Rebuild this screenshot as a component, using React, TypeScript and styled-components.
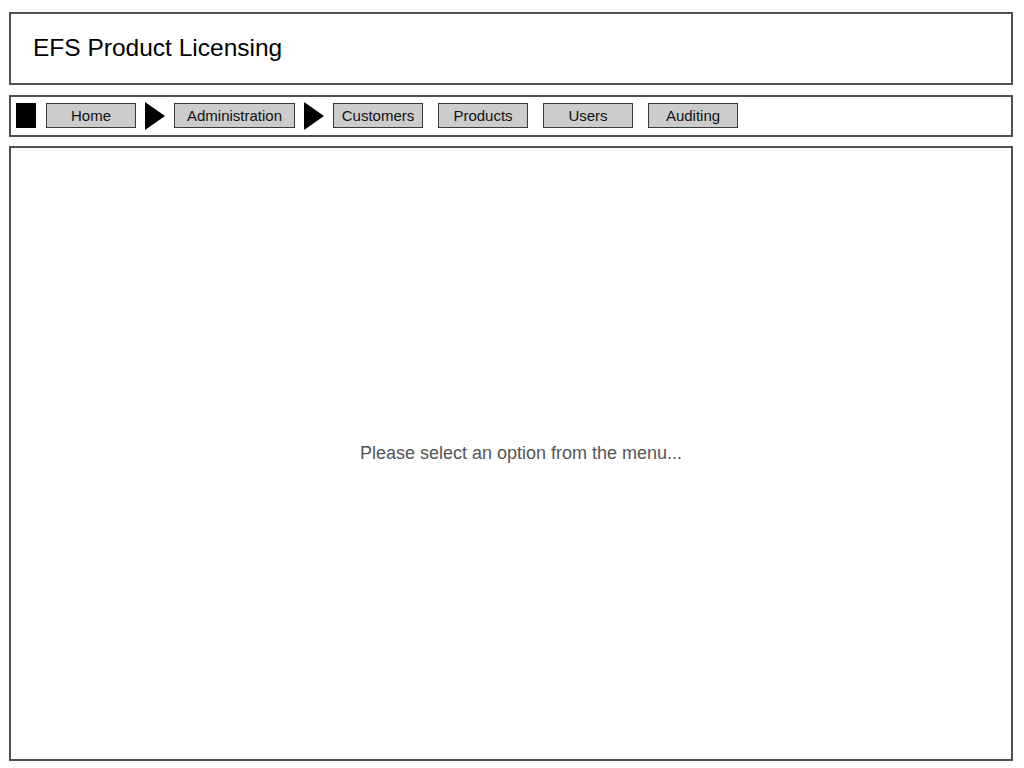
import React from 'react';
import styled, { createGlobalStyle } from 'styled-components';

const GlobalStyle = createGlobalStyle`
  html, body {
    margin: 0;
    padding: 0;
    background: #ffffff;
  }
  body {
    font-family: "Liberation Sans", Arial, sans-serif;
    color: #000;
  }
`;

const menu = ['Customers', 'Products', 'Users', 'Auditing'];

const App: React.FC = () => {
  return (
    <>
      <GlobalStyle />
      <Page>
        <Header>
          <Title>EFS Product Licensing</Title>
        </Header>
        <NavBar>
          <Stop />
          <NavButton $width={90}>Home</NavButton>
          <Arrow />
          <NavButton $width={121}>Administration</NavButton>
          <Arrow />
          <MenuGroup>
            {menu.map((item) => (
              <NavButton key={item} $width={90}>
                {item}
              </NavButton>
            ))}
          </MenuGroup>
        </NavBar>
        <Content>
          <Hint>Please select an option from the menu...</Hint>
        </Content>
      </Page>
    </>
  );
};

export default App;

const Page = styled.div`
  display: flex;
  flex-direction: column;
  width: 1004px;
  padding: 12px 0 0 9px;
`;

const Box = styled.div`
  box-sizing: border-box;
  border: 2px solid #505050;
  background: #fff;
`;

const Header = styled(Box)`
  height: 73px;
  margin-bottom: 10px;
  display: flex;
  align-items: center;
  padding: 0 0 2px 22px;
`;

const Title = styled.h1`
  margin: 0;
  font-size: 24.5px;
  font-weight: normal;
`;

const NavBar = styled(Box)`
  height: 42px;
  margin-bottom: 9px;
  display: flex;
  align-items: center;
  padding: 0 0 1px 5px;
  gap: 9px;
`;

const Stop = styled.div`
  width: 20px;
  height: 25px;
  background: #000;
  margin-right: 1px;
`;

const Arrow = styled.div`
  width: 0;
  height: 0;
  border-top: 14px solid transparent;
  border-bottom: 14px solid transparent;
  border-left: 20px solid #000;
`;

const MenuGroup = styled.div`
  display: flex;
  align-items: center;
  gap: 15px;
`;

const NavButton = styled.div<{ $width: number }>`
  box-sizing: border-box;
  width: ${(p) => p.$width}px;
  height: 25px;
  background: #cccccc;
  border: 1px solid #3a3a3a;
  display: flex;
  align-items: center;
  justify-content: center;
  font-size: 15px;
  color: #111;
`;

const Content = styled(Box)`
  height: 615px;
  display: flex;
  align-items: center;
  justify-content: center;
`;

const Hint = styled.div`
  font-size: 18px;
  color: #555555;
  margin: 0 0 0 20px;
`;
